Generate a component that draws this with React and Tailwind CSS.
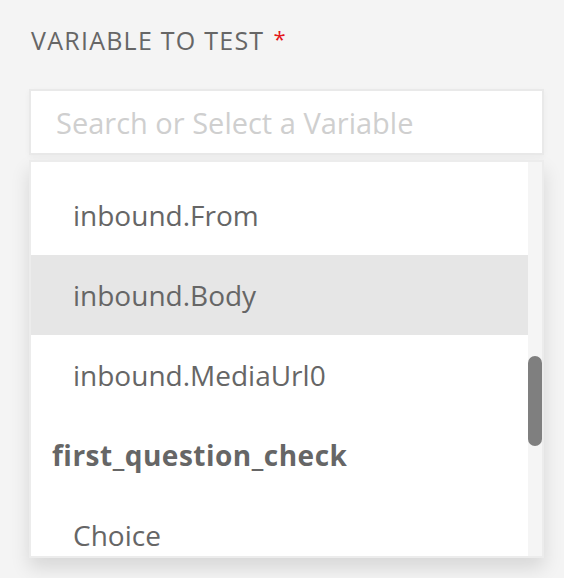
export default function App() {
  const font = { fontFamily: '"Open Sans", "Liberation Sans", sans-serif' };
  return (
    <div className="w-[564px] h-[578px] bg-[#f4f4f4] overflow-hidden pl-[29px] pr-[20px] pt-[26px]" style={font}>
      <div className="flex items-center h-[28px] pl-[2px] text-[25px] leading-none tracking-[0.05em] text-[#666]">
        <span>VARIABLE TO TEST</span>
        <span className="ml-[9px] text-[#e4161b] text-[22px] -mt-[4px]">*</span>
      </div>
      <div className="mt-[35px] h-[66px] border-2 border-[#e9e9e9] bg-white flex items-center pl-[25px] shadow-[0_2px_6px_rgba(0,0,0,0.04)]">
        <span className="text-[29px] text-[#cfcfcf] leading-none">Search or Select a Variable</span>
      </div>
      <div className="mt-[5px] h-[398px] border-2 border-[#ececec] flex shadow-[0_10px_18px_rgba(0,0,0,0.12)] bg-white">
        <div className="flex-1 overflow-hidden bg-white pt-[13px] text-[28px] text-[#666] leading-none">
          <div className="h-[80px] flex items-center pl-[42px]">inbound.From</div>
          <div className="h-[80px] flex items-center pl-[42px] bg-[#e6e6e6]">inbound.Body</div>
          <div className="h-[80px] flex items-center pl-[42px]">inbound.MediaUrl0</div>
          <div className="h-[80px] flex items-center pl-[21px] font-bold tracking-[0.018em]">first_question_check</div>
          <div className="h-[80px] flex items-center pl-[42px]">Choice</div>
        </div>
        <div className="w-[14px] bg-[#f5f5f5] relative">
          <div className="absolute left-0 w-[14px] top-[194px] h-[90px] rounded-full bg-[#7f7f7f]" />
        </div>
      </div>
    </div>
  );
}
